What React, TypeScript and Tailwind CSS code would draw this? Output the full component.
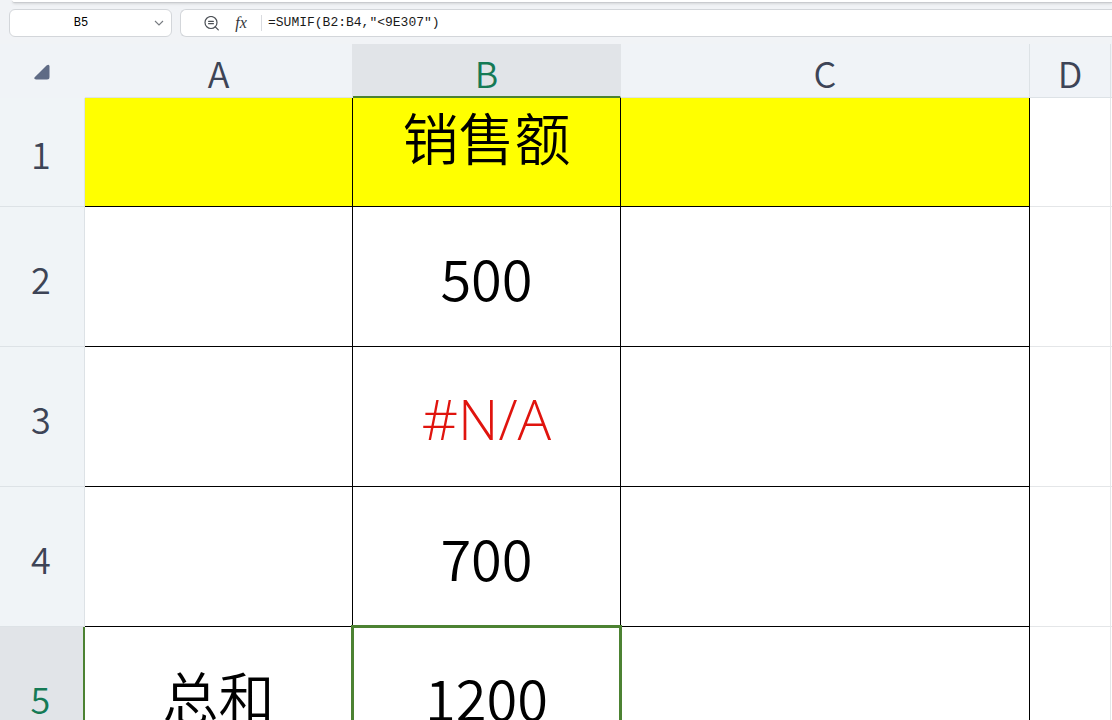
import { useState } from "react";

type Row = { n: number; height: string; fill?: boolean; a?: string; b: string; bStyle?: string };

const rows: Row[] = [
  { n: 1, height: "h-[109px]", fill: true, b: "销售额", bStyle: "pb-8" },
  { n: 2, height: "h-[140px]", b: "500" },
  { n: 3, height: "h-[140px]", b: "#N/A", bStyle: "font-['Open_Sans',sans-serif] pt-0.5 text-[#e0140e]" },
  { n: 4, height: "h-[140px]", b: "700" },
  { n: 5, height: "h-[140px]", a: "总和", b: "1200" },
];

const columns = ["A", "B", "C", "D"];
const ACTIVE_COLUMN = "B";
const ACTIVE_ROW = 5;

function FormulaBar() {
  const [name, setName] = useState("B5");
  const [formula, setFormula] = useState('=SUMIF(B2:B4,"<9E307")');
  return (
    <header className="bg-[#f1f3f6]">
      <div className="ml-3 h-[3px] rounded-bl-md border-b border-[#c9cbcf] bg-white shadow-sm" />
      <div className="flex gap-2 pt-1.5 pb-[7px] pl-[9px]">
        <div className="flex h-7 w-[163px] shrink-0 items-center rounded-md border border-[#d3d6da] bg-white">
          <input
            aria-label="名称框"
            className="w-full min-w-0 flex-1 bg-transparent pl-[5px] text-center font-['Liberation_Mono',monospace] text-xs text-black outline-none"
            value={name}
            onChange={(e) => setName(e.target.value)}
          />
          <button type="button" aria-label="展开名称" className="flex h-full w-6 shrink-0 items-center justify-center">
            <svg width="10" height="6" viewBox="0 0 10 6" fill="none" stroke="#777b80" strokeWidth="1.1">
              <path d="M1 1l4 4 4-4" />
            </svg>
          </button>
        </div>
        <div className="flex h-7 min-w-0 flex-1 items-center rounded-l-md border border-r-0 border-[#d3d6da] bg-white pl-[22px]">
          <button type="button" aria-label="缩小" className="flex w-5 shrink-0 items-center">
            <svg width="17" height="17" viewBox="0 0 17 17" fill="none" stroke="#4c5056" strokeWidth="1.2" strokeLinecap="round">
              <circle cx="8" cy="7.5" r="6" />
              <path d="M12.3 11.8l3 3M5.6 6.3h4.8M5.6 8.7h4.8" />
            </svg>
          </button>
          <button
            type="button"
            aria-label="插入函数"
            className="ml-1 w-7 shrink-0 text-center font-['Liberation_Serif',serif] text-base leading-5 text-[#33363b] italic"
          >
            fx
          </button>
          <span className="ml-1.5 h-4 w-px shrink-0 bg-[#d9dbdf]" />
          <input
            aria-label="编辑栏"
            className="ml-1.5 min-w-0 flex-1 bg-transparent font-['Liberation_Mono',monospace] text-[13px] text-[#1a1a1a] outline-none"
            value={formula}
            onChange={(e) => setFormula(e.target.value)}
          />
        </div>
      </div>
    </header>
  );
}

function ColumnHeader({ label }: { label: string }) {
  const active = label === ACTIVE_COLUMN;
  return (
    <th
      scope="col"
      className={
        active
          ? "border-r border-b-2 border-r-[#e1e4e8] border-b-[#4c8232] bg-[#e1e4e8] pt-1 font-[350] text-[#157a55]"
          : label === "A"
            ? "border-r border-b border-r-[#e1e4e8] border-b-[#dde2e6] bg-[#f0f3f7] pt-0.5 font-[350] text-[#3d4456]"
            : "border-r border-b border-[#dde2e6] bg-[#f0f3f7] pt-0.5 font-[350] text-[#3d4456]"
      }
    >
      {label}
    </th>
  );
}

function SheetRow({ row }: { row: Row }) {
  const active = row.n === ACTIVE_ROW;
  const fill = row.fill ? "bg-[#ffff00]" : "bg-white";
  return (
    <tr className={row.height}>
      <th
        scope="row"
        className={
          active
            ? "border-r-2 border-b border-r-[#4c8232] border-b-[#dde2e6] bg-[#e1e4e8] pt-0.5 pr-0.5 text-4xl font-[350] text-[#157a55]"
            : "border-r border-b border-[#dde2e6] bg-[#f0f4f7] pt-0.5 pr-0.5 text-4xl font-[350] text-[#3d4456]"
        }
      >
        {row.n}
      </th>
      <td className={`border-r border-b border-black pb-1 ${fill}`}>{row.a}</td>
      <td className={`relative border-r border-b border-black ${fill} ${row.bStyle ?? ""}`}>
        {row.b}
        {active && <span className="pointer-events-none absolute -inset-0.5 border-3 border-[#4c8232]" />}
      </td>
      <td className={`border-r border-b border-black ${fill}`} />
      <td className="border-r border-b border-[#e4e6e8] bg-white" />
      <td className="border-b border-[#e4e6e8] bg-white" />
    </tr>
  );
}

export default function App() {
  return (
    <div className="flex h-screen flex-col overflow-hidden bg-white font-['Noto_Sans_CJK_SC',sans-serif]">
      <FormulaBar />
      <main className="min-h-0 flex-1 overflow-hidden">
        <table className="w-full min-w-[1112px] table-fixed border-separate border-spacing-0 text-center text-[56px] leading-[64px] font-[350] text-black">
          <colgroup>
            <col className="w-[85px]" />
            <col className="w-[268px]" />
            <col className="w-[268px]" />
            <col className="w-[409px]" />
            <col className="w-[81px]" />
            <col />
          </colgroup>
          <thead>
            <tr className="h-[54px] text-4xl">
              <td className="border-r border-b border-[#f0f3f7] bg-[#f0f3f7] pt-0.5">
                <button type="button" aria-label="全选" className="flex w-full justify-center">
                  <svg width="16" height="16" viewBox="0 0 16 16" fill="#5f6b85">
                    <path d="M.7 13.2 12.8 1.2Q15.5-.4 15.5 2.6V13q0 2.5-2.5 2.5H2Q-.6 15.2.7 13.2z" />
                  </svg>
                </button>
              </td>
              {columns.map((label) => (
                <ColumnHeader key={label} label={label} />
              ))}
              <td className="border-b border-[#dde2e6] bg-[#f0f3f7]" />
            </tr>
          </thead>
          <tbody>
            {rows.map((row) => (
              <SheetRow key={row.n} row={row} />
            ))}
          </tbody>
        </table>
      </main>
    </div>
  );
}
